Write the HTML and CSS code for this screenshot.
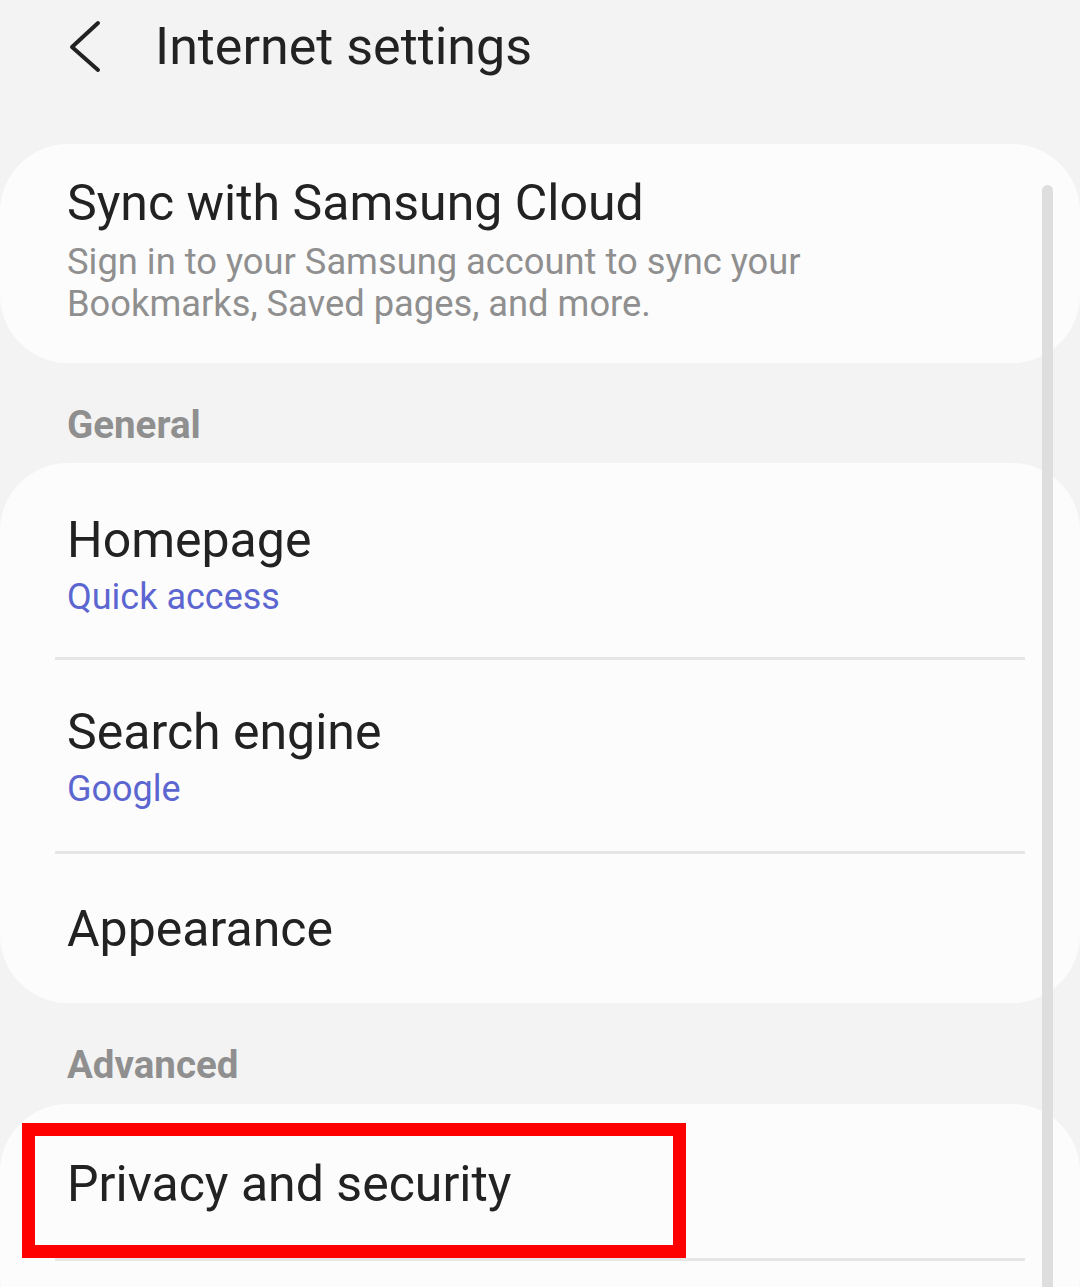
FILE: index.html
```html
<!DOCTYPE html>
<html lang="en">
<head>
<meta charset="utf-8">
<title>Internet settings</title>
<link rel="stylesheet" href="styles.css">
</head>
<body>
<div class="screen">
  <header class="topbar">
    <span class="back">
      <svg width="40" height="60" viewBox="0 0 40 60" aria-hidden="true">
        <polyline points="32,7 6,31 32,54" fill="none" stroke="#222" stroke-width="4" stroke-linecap="round" stroke-linejoin="round"/>
      </svg>
    </span>
    <h1 class="title">Internet settings</h1>
  </header>

  <section class="card card-sync">
    <div class="row-title">Sync with Samsung Cloud</div>
    <div class="row-desc">Sign in to your Samsung account to sync your<br>Bookmarks, Saved pages, and more.</div>
  </section>

  <div class="section-label">General</div>

  <section class="card card-general">
    <div class="row row-two row-home">
      <div class="row-title">Homepage</div>
      <div class="row-value">Quick access</div>
    </div>
    <div class="divider"></div>
    <div class="row row-two row-search">
      <div class="row-title">Search engine</div>
      <div class="row-value">Google</div>
    </div>
    <div class="divider"></div>
    <div class="row row-one">
      <div class="row-title">Appearance</div>
    </div>
  </section>

  <div class="section-label section-label-adv">Advanced</div>

  <section class="card card-last">
    <div class="row row-privacy">
      <div class="row-title">Privacy and security</div>
    </div>
    <div class="divider"></div>
  </section>

  <div class="scrollbar"></div>
  <div class="highlight"></div>
</div>
</body>
</html>
```

FILE: styles.css
```css
html, body {
  margin: 0;
  padding: 0;
  background: #f3f3f3;
}
body {
  font-family: Roboto, "Noto Sans", "Liberation Sans", sans-serif;
  color: #222222;
}
.screen {
  position: relative;
  width: 1080px;
  height: 1287px;
  overflow: hidden;
}
.topbar {
  height: 144px;
  display: flex;
  align-items: flex-start;
  box-sizing: border-box;
  padding-top: 15px;
}
.back {
  width: 40px;
  height: 60px;
  margin-left: 66px;
  margin-top: 1px;
  display: block;
}
.back svg { display: block; }
.title {
  margin: 0 0 0 49px;
  font-size: 52px;
  font-weight: 400;
  line-height: 64px;
  letter-spacing: 0;
}
.card {
  background: #fcfcfc;
  border-radius: 68px;
}
.card-sync {
  height: 219px;
  box-sizing: border-box;
  padding: 29px 67px 0;
}
.row-title {
  font-size: 50px;
  line-height: 60px;
  color: #222222;
}
.row-desc {
  margin-top: 8px;
  font-size: 36.3px;
  line-height: 42px;
  color: #8f8f8f;
}
.section-label {
  height: 100px;
  box-sizing: border-box;
  padding: 40px 67px 0;
  font-size: 38.5px;
  font-weight: 700;
  line-height: 44px;
  color: #8f8f8f;
}
.section-label-adv {
  height: 101px;
}
.card-general {
  height: 540px;
}
.row {
  padding: 0 67px;
  display: flex;
  flex-direction: column;
  box-sizing: border-box;
}
.row-two {
  justify-content: flex-start;
}
.row-home {
  height: 194px;
  padding-top: 47px;
}
.row-search {
  height: 191px;
  padding-top: 42px;
}
.row-one {
  height: 149px;
  justify-content: center;
}
.row-privacy {
  height: 154px;
  padding-top: 5px;
  justify-content: center;
}
.row-value {
  margin-top: 2px;
  font-size: 36px;
  line-height: 50px;
  color: #5c66d0;
}
.divider {
  height: 3px;
  margin: 0 55px;
  background: #e6e6e6;
}
.card-last {
  height: 240px;
}
.scrollbar {
  position: absolute;
  left: 1042px;
  top: 185px;
  width: 11px;
  height: 1200px;
  border-radius: 6px;
  background: #dedede;
}
.highlight {
  position: absolute;
  left: 22px;
  top: 1123px;
  width: 664px;
  height: 135px;
  box-sizing: border-box;
  border: 13px solid #ff0000;
}
```
